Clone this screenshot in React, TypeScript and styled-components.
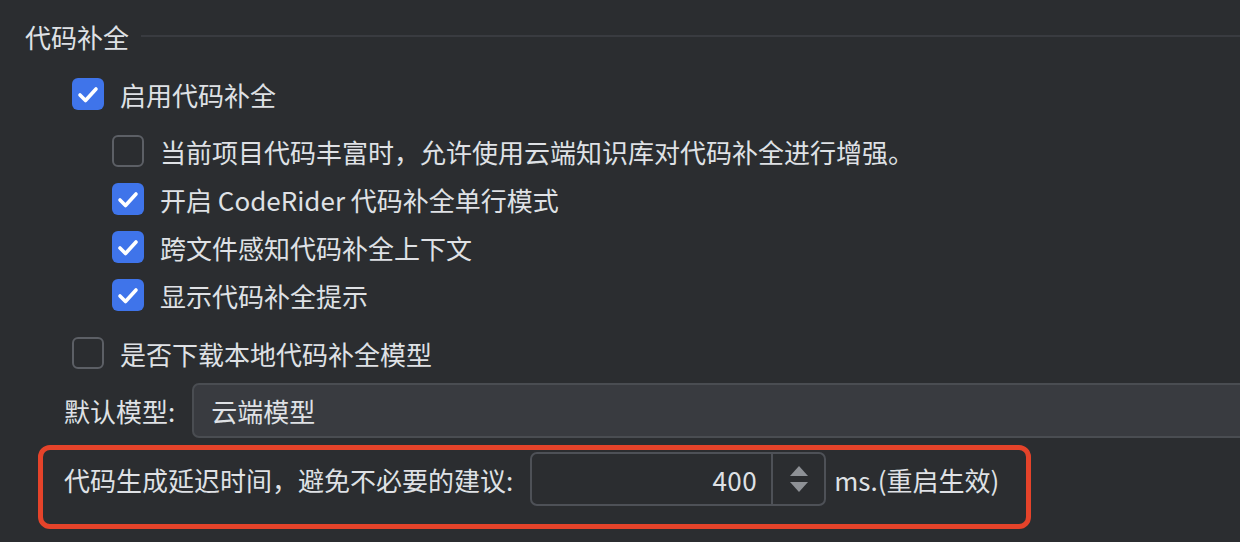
import React from 'react'
import {styled, createGlobalStyle} from 'styled-components'

const GlobalStyle = createGlobalStyle`
  html, body {
    margin: 0;
    padding: 0;
    background: #2b2d30;
    overflow: hidden;
  }
  body {
    font-family: "Noto Sans CJK SC", "Noto Sans", sans-serif;
    color: #dfe1e5;
    font-size: 26px;
  }
`

const Page = styled.div`
  width: 1240px;
  height: 542px;
  padding: 12px 0 0 25px;
  box-sizing: border-box;
  display: flex;
  flex-direction: column;
`

const Header = styled.div`
  height: 48px;
  display: flex;
  align-items: center;
  gap: 12px;

  .line {
    flex: 1;
    height: 2px;
    background: #393b40;
    margin-right: -40px;
  }
`

const Row = styled.label<{ $indent: number, $top: number }>`
  height: 48px;
  display: flex;
  align-items: center;
  gap: 16px;
  margin-left: ${p => p.$indent}px;
  margin-top: ${p => p.$top}px;
  white-space: nowrap;
`

const Box = styled.span<{ $checked: boolean }>`
  width: 32px;
  height: 32px;
  box-sizing: border-box;
  border-radius: 6px;
  flex-shrink: 0;
  display: flex;
  align-items: center;
  justify-content: center;
  background: ${p => p.$checked ? '#3f74ea' : 'transparent'};
  border: ${p => p.$checked ? 'none' : '2px solid #5c5f65'};
`

const SelectRow = styled.div`
  display: flex;
  align-items: center;
  gap: 17px;
  margin: 6px 0 0 39px;
  white-space: nowrap;
`

const Select = styled.div`
  flex: 1;
  margin-right: -40px;
  height: 55px;
  box-sizing: border-box;
  border: 2px solid #4a4d52;
  border-radius: 7px;
  background: #393b40;
  display: flex;
  align-items: center;
  padding-left: 17px;
`

const Highlight = styled.div`
  margin: 7px 0 0 13px;
  width: 993px;
  height: 84px;
  box-sizing: border-box;
  border: 5px solid #e5432a;
  border-radius: 12px;
  padding: 2px 0 0 21px;
  display: flex;
  align-items: flex-start;
  white-space: nowrap;

  .label {
    height: 54px;
    display: flex;
    align-items: center;
    margin-right: 17px;
  }
  .unit {
    height: 54px;
    display: flex;
    align-items: center;
    margin-left: 8px;
  }
`

const Spinner = styled.div`
  width: 296px;
  height: 54px;
  box-sizing: border-box;
  border: 2px solid #4e5157;
  border-radius: 7px;
  display: flex;

  .value {
    flex: 1;
    display: flex;
    align-items: center;
    justify-content: flex-end;
    padding-right: 14px;
    letter-spacing: 0.5px;
    border-right: 2px solid #4e5157;
  }
  .arrows {
    width: 51px;
    display: flex;
    align-items: center;
    justify-content: center;
  }
`

const Check = () =>
    <svg width="32" height="32" viewBox="0 0 32 32">
        <path d="M8 17 L13.5 22.5 L24 11" fill="none" stroke="#fff" strokeWidth="3.6" strokeLinecap="round" strokeLinejoin="round"/>
    </svg>

const CheckRow = (props: { checked: boolean, indent: number, top: number, text: string }) =>
    <Row $indent={props.indent} $top={props.top}>
        <Box $checked={props.checked}>{props.checked && <Check/>}</Box>
        <span>{props.text}</span>
    </Row>

export default function App() {
    return <>
        <GlobalStyle/>
        <Page>
            <Header>
                <span>代码补全</span>
                <div className={'line'}/>
            </Header>
            <CheckRow checked={true} indent={47} top={10} text={'启用代码补全'}/>
            <CheckRow checked={false} indent={87} top={9} text={'当前项目代码丰富时，允许使用云端知识库对代码补全进行增强。'}/>
            <CheckRow checked={true} indent={87} top={0} text={'开启 CodeRider 代码补全单行模式'}/>
            <CheckRow checked={true} indent={87} top={0} text={'跨文件感知代码补全上下文'}/>
            <CheckRow checked={true} indent={87} top={0} text={'显示代码补全提示'}/>
            <CheckRow checked={false} indent={47} top={10} text={'是否下载本地代码补全模型'}/>
            <SelectRow>
                <span>默认模型:</span>
                <Select>云端模型</Select>
            </SelectRow>
            <Highlight>
                <span className={'label'}>代码生成延迟时间，避免不必要的建议:</span>
                <Spinner>
                    <div className={'value'}>400</div>
                    <div className={'arrows'}>
                        <svg width="20" height="26" viewBox="0 0 20 26">
                            <path d="M10 0 L19 10 L1 10 Z" fill="#8e9196"/>
                            <path d="M10 26 L19 16 L1 16 Z" fill="#8e9196"/>
                        </svg>
                    </div>
                </Spinner>
                <span className={'unit'}>ms.(重启生效)</span>
            </Highlight>
        </Page>
    </>
}
